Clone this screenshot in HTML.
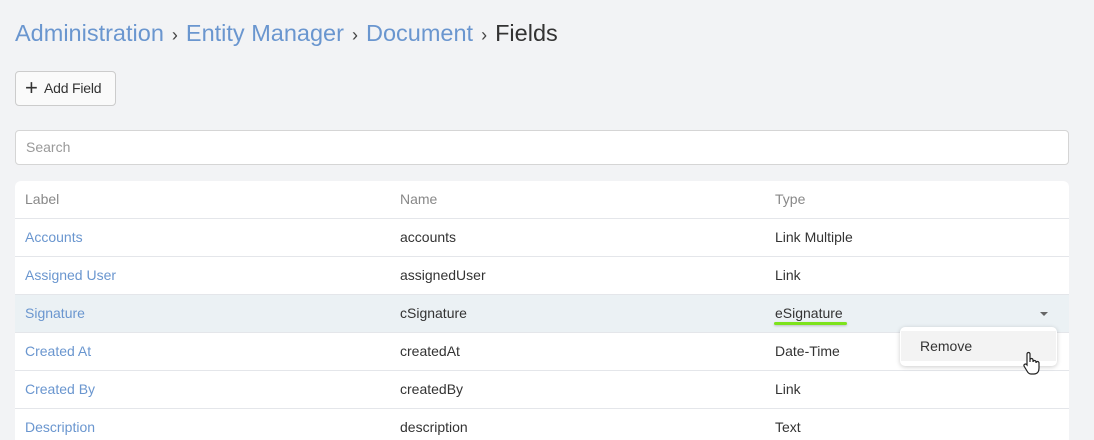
<!DOCTYPE html><html><head><style>
html,body{margin:0;width:1094px;height:440px;overflow:hidden}
body{background:#f2f3f5;font-family:"Liberation Sans",sans-serif;position:relative}
.bc{position:absolute;left:15px;top:20px;font-size:23.5px;color:#333;white-space:nowrap}
.bc a{color:#6a96cf}.bc .s{font-size:18px;margin:0 8px;color:#444}
.btn{position:absolute;left:15px;top:71px;width:99px;height:33px;border:1px solid #ccc;border-radius:4px;background:#fafafa;font-size:14px;color:#333;line-height:33px;box-sizing:content-box}
.btn span{font-size:22px;position:absolute;left:9px;top:-1px}
.btn b{font-weight:normal;position:absolute;left:28px;letter-spacing:-.2px}
.search{position:absolute;left:15px;top:130px;width:1052px;height:33px;border:1px solid #d5d5d5;border-radius:4px;background:#fff;font-size:14px;color:#999;line-height:33px;text-indent:10px}
.panel{position:absolute;left:15px;top:181px;width:1054px;height:270px;background:#fff;border-radius:6px}
.r{position:absolute;left:0;width:1054px;height:38px;border-top:1px solid #e4e6ea;font-size:14px;line-height:37px;color:#333}
.r div{position:absolute;top:0}
.c1{left:10px;color:#6a96cf}.c2{left:385px}.c3{left:760px}
.h{border-top:none;color:#888}.h .c1{color:#888}
.menu{position:absolute;left:900px;top:327px;width:157px;height:39px;background:#fff;border-radius:5px;box-shadow:0 1px 5px rgba(0,0,0,.2)}
.menu div{position:absolute;left:1px;right:1px;top:4px;height:30px;background:#f3f3f3;font-size:14px;line-height:30px;padding-left:19px;color:#333}
</style></head><body>
<div class="bc"><a>Administration</a><span class="s">›</span><a>Entity Manager</a><span class="s">›</span><a>Document</a><span class="s">›</span>Fields</div>
<div class="btn"><span>+</span><b>Add Field</b></div>
<div class="search">Search</div>
<div class="panel">
<div class="r h" style="top:0"><div class="c1">Label</div><div class="c2">Name</div><div class="c3">Type</div></div>
<div class="r" style="top:37px"><div class="c1">Accounts</div><div class="c2">accounts</div><div class="c3">Link Multiple</div></div>
<div class="r" style="top:75px"><div class="c1">Assigned User</div><div class="c2">assignedUser</div><div class="c3">Link</div></div>
<div class="r" style="top:113px;background:#ebf1f4"><div class="c1">Signature</div><div class="c2">cSignature</div><div class="c3">eSignature<span style="position:absolute;left:-1px;right:-4px;top:27px;height:3px;background:#7de31c;border-radius:2px;box-shadow:0 1px 2px rgba(0,0,0,.2)"></span></div><div style="left:1025px;top:17px;width:0;height:0;border-left:4px solid transparent;border-right:4px solid transparent;border-top:4px solid #666"></div></div>
<div class="r" style="top:151px"><div class="c1">Created At</div><div class="c2">createdAt</div><div class="c3">Date-Time</div></div>
<div class="r" style="top:189px"><div class="c1">Created By</div><div class="c2">createdBy</div><div class="c3">Link</div></div>
<div class="r" style="top:227px"><div class="c1">Description</div><div class="c2">description</div><div class="c3">Text</div></div>
</div>
<div class="menu"><div>Remove</div></div>
<svg style="position:absolute;left:1021px;top:351px" width="20" height="26" viewBox="0 0 20 26"><path d="M6 14V3a1.5 1.5 0 0 1 3 0v8V9a1.5 1.5 0 0 1 3 0v2a1.5 1.5 0 0 1 3 0v1a1.5 1.5 0 0 1 3 0v5c0 4-2 6-5 6h-3c-2 0-3-1-4-3l-3-5a1.5 1.5 0 0 1 2.5-1.5z" fill="#fff" stroke="#222" stroke-width="1.2"/></svg>
</body></html>
